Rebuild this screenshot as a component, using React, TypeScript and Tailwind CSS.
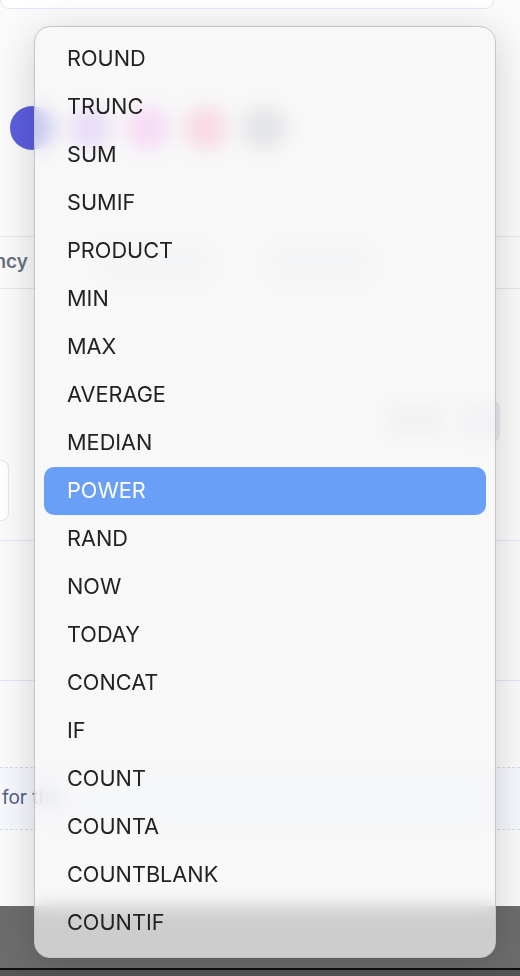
import React from "react";

const FUNCTIONS = [
  "ROUND",
  "TRUNC",
  "SUM",
  "SUMIF",
  "PRODUCT",
  "MIN",
  "MAX",
  "AVERAGE",
  "MEDIAN",
  "POWER",
  "RAND",
  "NOW",
  "TODAY",
  "CONCAT",
  "IF",
  "COUNT",
  "COUNTA",
  "COUNTBLANK",
  "COUNTIF",
];

const SWATCHES = [
  "bg-[#5b5fe0]",
  "bg-[#c9a4fa]",
  "bg-[#f59cf3]",
  "bg-[#fb98bf]",
  "bg-[#b4b8c2]",
];

function BackgroundPage() {
  return (
    <div className="flex h-full flex-col">
      <div className="h-[9px] w-[494px] shrink-0 rounded-b-xl border border-t-0 border-[#e2e5f4] bg-white" />

      <div className="mt-[97px] flex gap-[14px] pl-[10px]">
        {SWATCHES.map((c) => (
          <div key={c} className={`h-11 w-11 rounded-full ${c}`} />
        ))}
      </div>

      <div className="mt-[86px] flex h-[53px] items-center border-y border-[#e5e7eb]">
        <div className="flex w-[28px] shrink-0 justify-end whitespace-nowrap">
          <span className="text-[19px] font-semibold text-[#6b7280]">Frequency</span>
        </div>
        <div className="ml-[72px] h-[34px] w-[110px] rounded-lg bg-[#eef0f3]" />
        <div className="ml-[60px] h-[34px] w-[100px] rounded-lg bg-[#eef0f3]" />
      </div>

      <div className="mt-[112px] flex items-center justify-end pr-[20px]">
        <div className="h-8 w-14 rounded-md bg-[#e3e5ea]" />
        <div className="ml-4 h-10 w-10 rounded-md bg-[#e8eaf0]" />
      </div>

      <div className="mt-[19px] h-[61px] w-[9px] rounded-r-lg border border-l-0 border-[#e2e5f4] bg-white" />

      <div className="mt-[19px] h-px w-full bg-[#e2e5f4]" />
      <div className="mt-[139px] h-px w-full bg-[#e2e5f4]" />

      <div className="mt-[86px] flex h-[63px] items-center border-y border-dashed border-[#d5dbe8] bg-[#f6f8fd] pl-[2px]">
        <span className="whitespace-nowrap text-[19px] text-[#4f6186]">for the</span>
      </div>

      <div className="mt-auto flex flex-col">
        <div className="h-[62px] bg-[#6d6d6d]" />
        <div className="h-[2px] bg-[#111]" />
        <div className="h-[6px] bg-[#565656]" />
      </div>
    </div>
  );
}

export default function App() {
  return (
    <div
      className="relative h-[976px] w-[520px] overflow-hidden bg-[#fbfbfb]"
      style={{ fontFamily: "Inter, 'Liberation Sans', sans-serif" }}
    >
      <BackgroundPage />

      <div className="absolute left-[34px] top-[26px] h-[932px] w-[462px] rounded-2xl border border-[#c4c4c4] bg-[#f7f7f7]/70 px-[9px] pt-2 shadow-[0_8px_40px_rgba(0,0,0,0.18)] backdrop-blur-[9px]">
        <ul className="flex flex-col">
          {FUNCTIONS.map((name) => {
            const active = name === "POWER";
            return (
              <li
                key={name}
                className={
                  active
                    ? "flex h-12 items-center rounded-[10px] bg-[#6a9ff7] pb-[2px] pl-[23px] text-[21.7px] text-white"
                    : "flex h-12 items-center pb-[2px] pl-[23px] text-[21.7px] text-[#222]"
                }
              >
                {name}
              </li>
            );
          })}
        </ul>
      </div>
    </div>
  );
}
